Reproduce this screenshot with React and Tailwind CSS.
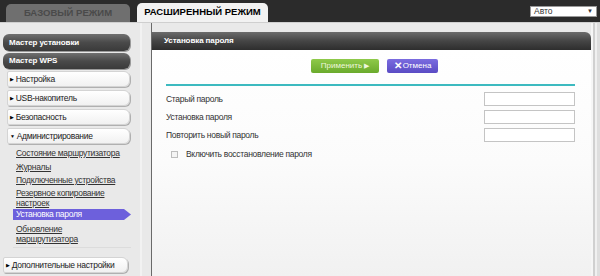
import React from "react";

const F = { fontFamily: '"Liberation Sans", Arial, sans-serif' };

function DarkBtn({ children, className = "" }) {
  return (
    <div
      className={`flex items-center rounded-[6px] bg-gradient-to-b from-[#707070] via-[#4a4a4a] to-[#3a3a3a] pl-[6px] text-[8px] font-bold tracking-[-0.1px] text-white shadow-[1px_1px_0_#9a9a9a] ${className}`}
    >
      {children}
    </div>
  );
}

function WhiteBtn({ children, open = false, className = "" }) {
  return (
    <div
      className={`flex items-center whitespace-nowrap rounded-l-[2px] rounded-r-[6px] border border-[#d4d4d4] bg-gradient-to-b from-white to-[#f1f1f1] pl-[2px] text-[8.5px] tracking-[-0.3px] text-[#222] shadow-[1px_1px_0_#b0b0b0] ${className}`}
    >
      <span className="mr-[2px] text-[5px] leading-none text-black">{open ? "▼" : "▶"}</span>
      {children}
    </div>
  );
}

function SubItem({ children, className = "" }) {
  return (
    <div className={`whitespace-nowrap pl-[13px] text-[8.5px] leading-[10px] tracking-[-0.3px] text-[#333] underline ${className}`}>{children}</div>
  );
}

function Field({ label, className = "" }) {
  return (
    <div className={`flex h-[14px] items-center justify-between ${className}`}>
      <span className="text-[8.5px] tracking-[-0.3px] text-[#333]">{label}</span>
      <div className="h-[14px] w-[91px] border border-[#c4c4c4] bg-white" />
    </div>
  );
}

export default function App() {
  return (
    <div style={F} className="h-[276px] w-[600px] overflow-hidden bg-[#e9e9e9]">
      {/* top bar */}
      <div className="flex h-[22px] items-end bg-[#2b2b2b] pl-[6px]">
        <div className="flex h-[18px] w-[124px] items-center justify-center rounded-t-[5px] bg-[#6f6f6f] text-[9.5px] font-bold text-[#4a4a4a]">
          БАЗОВЫЙ РЕЖИМ
        </div>
        <div className="ml-[7px] flex h-[19px] w-[131px] items-center justify-center rounded-t-[5px] bg-[#f2f2f2] text-[9.5px] font-bold text-black">
          РАСШИРЕННЫЙ РЕЖИМ
        </div>
        <div className="mb-[5px] ml-auto mr-[3px] flex h-[11px] w-[67px] items-center justify-between border border-[#999] bg-white px-[3px] text-[8.5px] text-[#333]">
          <span>Авто</span>
          <span className="text-[6px]">▼</span>
        </div>
      </div>
      <div className="h-px bg-[#cfcfcf]" />

      <div className="flex">
        {/* sidebar */}
        <div className="flex w-[131px] shrink-0 flex-col pl-[3px]">
          <DarkBtn className="mt-[11px] h-[17px] w-[127px]">Мастер установки</DarkBtn>
          <DarkBtn className="mt-[2px] h-[16px] w-[127px]">Мастер WPS</DarkBtn>
          <WhiteBtn className="ml-[4px] mt-[2px] h-[16px] w-[123px]">Настройка</WhiteBtn>
          <WhiteBtn className="ml-[4px] mt-[3px] h-[16px] w-[123px]">USB-накопитель</WhiteBtn>
          <WhiteBtn className="ml-[4px] mt-[3px] h-[16px] w-[123px]">Безопасность</WhiteBtn>
          <WhiteBtn open className="ml-[4px] mt-[3px] h-[16px] w-[123px]">Администрирование</WhiteBtn>
          <SubItem className="mt-[4px]">Состояние маршрутизатора</SubItem>
          <SubItem className="mt-[4px]">Журналы</SubItem>
          <SubItem className="mt-[3px]">Подключенные устройства</SubItem>
          <SubItem className="mt-[3px]">
            Резервное копирование
            <br />
            настроек
          </SubItem>
          <div className="ml-[10px] mt-[1px] flex h-[11px] w-[118px] items-center whitespace-nowrap bg-[#6d60dc] pl-[3px] text-[8.5px] tracking-[-0.3px] text-white [clip-path:polygon(0_0,calc(100%-7px)_0,100%_50%,calc(100%-7px)_100%,0_100%)]">
            Установка пароля
          </div>
          <SubItem className="mt-[4px]">
            Обновление
            <br />
            маршрутизатора
          </SubItem>
          <div className="ml-[10px] mt-[3px] h-px w-[118px] bg-[#dcdcdc]" />
          <WhiteBtn className="mt-[9px] h-[16px] w-[125px]">Дополнительные настройки</WhiteBtn>
        </div>

        {/* spacer with stripe */}
        <div className="flex w-[20px] shrink-0">
          <div className="ml-[9px] w-[2px] bg-[#f2f2f2]" />
        </div>

        {/* main panel */}
        <div className="flex h-[253px] w-[440px] shrink-0 flex-col border-l border-[#6a6a6a] pt-[9px]">
          <div className="flex h-[18px] items-center rounded-tr-[6px] bg-gradient-to-b from-[#6c6c6c] via-[#454545] to-[#2e2e2e] pl-[12px] text-[8px] font-bold tracking-[-0.1px] text-white">
            Установка пароля
          </div>
          <div className="flex flex-1 flex-col bg-gradient-to-b from-white via-[#fbfbfb] to-[#f1f1f1] pl-[14px] pr-[16px]">
            <div className="mt-[9px] flex h-[14px] pl-[145px]">
              <div className="flex h-[14px] w-[68px] items-center justify-center rounded-[2px] bg-gradient-to-b from-[#8fca4a] to-[#6aaa2c] text-[8px] text-[#eef7dc]">
                Применить <span className="ml-[2px] text-[7px]">▶</span>
              </div>
              <div className="ml-[8px] flex h-[14px] w-[51px] items-center justify-center rounded-[2px] bg-gradient-to-b from-[#7b6ce0] to-[#5a4bc4] text-[8px] text-white">
                <span className="mr-[1px] text-[10px] font-bold leading-none">✕</span>Отмена
              </div>
            </div>
            <div className="mt-[11px] h-[2px] bg-[#3dbac0]" />
            <Field label="Старый пароль" className="mt-[6px]" />
            <Field label="Установка пароля" className="mt-[4px]" />
            <Field label="Повторить новый пароль" className="mt-[4px]" />
            <div className="mt-[6px] flex items-center pl-[5px]">
              <div className="h-[7px] w-[7px] border border-[#bdbdbd] bg-[#f4f4f4]" />
              <span className="ml-[8px] text-[8.5px] tracking-[-0.3px] text-[#333]">Включить восстановление пароля</span>
            </div>
            <div className="flex-1" />
          </div>
        </div>

        {/* right strips */}
        <div className="flex w-[9px] shrink-0">
          <div className="w-[2px] bg-[#f6f6f6]" />
          <div className="w-[2px] bg-[#d0d0d0]" />
          <div className="w-[2px] bg-[#f0f0f0]" />
          <div className="w-[3px] bg-[#dedede]" />
        </div>
      </div>
    </div>
  );
}
